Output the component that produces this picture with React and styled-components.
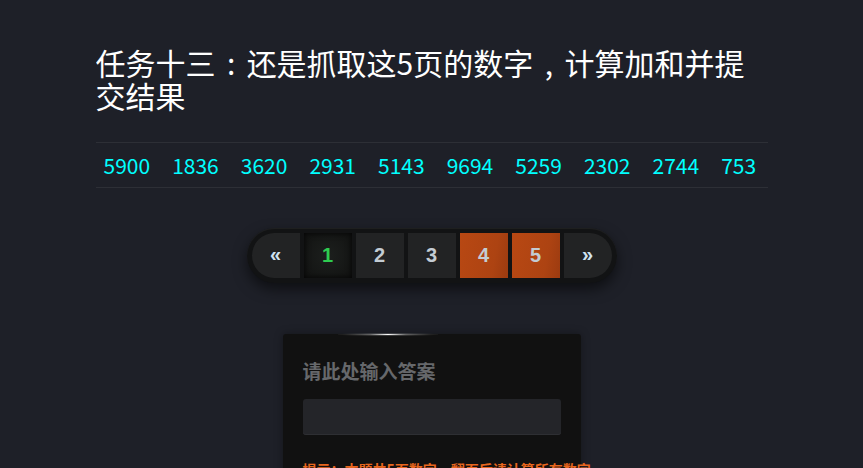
import React from 'react';
import styled, { createGlobalStyle } from 'styled-components';

const GlobalStyle = createGlobalStyle`
    html, body {
        margin: 0;
        padding: 0;
        background: #1e2028;
        font-family: "Noto Sans CJK SC", "Noto Sans", sans-serif;
        color: #fff;
    }
`;

const Page = styled.div`
    width: 672px;
    margin: 0 auto;
    padding-top: 46px;
    height: 468px;
    overflow: hidden;
    box-sizing: border-box;
`;

const Title = styled.h1`
    margin: 0 0 30px;
    font-size: 30px;
    font-weight: normal;
    line-height: 33px;
    color: #fff;
`;

// full-width punctuation drawn centred in its cell
const Punct = styled.span`
    padding: 0 0.38em;
`;

const NumberRow = styled.div`
    display: flex;
    gap: 22px;
    padding: 0 8px;
    height: 44px;
    align-items: center;
    border-top: 1px solid #2d2f36;
    border-bottom: 1px solid #2d2f36;
`;

const Num = styled.span`
    font-size: 21px;
    color: #0ff;
`;

const PagerWrap = styled.div`
    display: flex;
    justify-content: center;
    margin-top: 40px;
`;

const Pager = styled.div`
    display: flex;
    gap: 4px;
    padding: 5px;
    background: #121314;
    border-radius: 28px;
    box-shadow: 0 6px 14px rgba(0, 0, 0, 0.55), inset 0 1px 1px rgba(255, 255, 255, 0.06);
`;

const PageItem = styled.div`
    width: 48px;
    height: 45px;
    display: flex;
    align-items: center;
    justify-content: center;
    font-family: "Liberation Sans", Arial, sans-serif;
    font-weight: bold;
    font-size: 20px;
    color: ${p => (p.$current ? '#2ecc50' : '#c3ccd3')};
    background: ${p =>
        p.$current
            ? 'radial-gradient(circle, #1c1f1d 0%, #141514 80%)'
            : p.$hot
            ? 'linear-gradient(100deg, #b84813 0%, #ad4312 70%, #9c3b10 100%)'
            : '#222324'};
    box-shadow: ${p => (p.$current ? 'inset 0 0 6px rgba(0,0,0,0.9)' : 'none')};
    border-radius: ${p => (p.$edge === 'left' ? '23px 0 0 23px' : p.$edge === 'right' ? '0 23px 23px 0' : '0')};
`;

const Arrow = styled.span`
    font-size: 20px;
    font-weight: 900;
    color: #d0e2f0;
    margin-top: -2px;
`;

const Panel = styled.div`
    position: relative;
    width: 258px;
    margin: 51px auto 0;
    padding: 22px 20px 0;
    background: #111111;
    border-radius: 3px 3px 0 0;
    box-shadow: 0 0 8px rgba(0, 0, 0, 0.35);
`;

const Glow = styled.div`
    position: absolute;
    top: -1px;
    left: 55px;
    width: 100px;
    height: 3px;
    background: radial-gradient(ellipse at center, rgba(255,255,255,1) 0%, rgba(255,255,255,0.35) 25%, rgba(255,255,255,0.08) 60%, rgba(255,255,255,0) 80%);
`;

const PanelTitle = styled.div`
    font-size: 19px;
    font-weight: bold;
    color: #66686b;
    line-height: 30px;
`;

const AnswerInput = styled.input`
    display: block;
    box-sizing: border-box;
    width: 258px;
    height: 36px;
    margin-top: 13px;
    border: none;
    border-radius: 3px;
    background: #242529;
    box-shadow: inset 0 -1px 0 #2e2f33;
    outline: none;
`;

const Hint = styled.div`
    margin-top: 24px;
    font-size: 14px;
    font-weight: bold;
    color: #e8661e;
    white-space: nowrap;
`;

const numbers = [5900, 1836, 3620, 2931, 5143, 9694, 5259, 2302, 2744, 753];

export default function App() {
    return (
        <>
            <GlobalStyle />
            <Page>
                <Title>
                    任务十三<Punct>:</Punct>还是抓取这5页的数字<Punct>,</Punct>计算加和并提交结果
                </Title>
                <NumberRow>
                    {numbers.map((n, i) => <Num key={i}>{n}</Num>)}
                </NumberRow>
                <PagerWrap>
                    <Pager>
                        <PageItem $edge="left"><Arrow>«</Arrow></PageItem>
                        <PageItem $current>1</PageItem>
                        <PageItem>2</PageItem>
                        <PageItem>3</PageItem>
                        <PageItem $hot>4</PageItem>
                        <PageItem $hot>5</PageItem>
                        <PageItem $edge="right"><Arrow>»</Arrow></PageItem>
                    </Pager>
                </PagerWrap>
                <Panel>
                    <Glow />
                    <PanelTitle>请此处输入答案</PanelTitle>
                    <AnswerInput />
                    <Hint>提示：本题共5页数字，翻页后请计算所有数字</Hint>
                </Panel>
            </Page>
        </>
    );
}
